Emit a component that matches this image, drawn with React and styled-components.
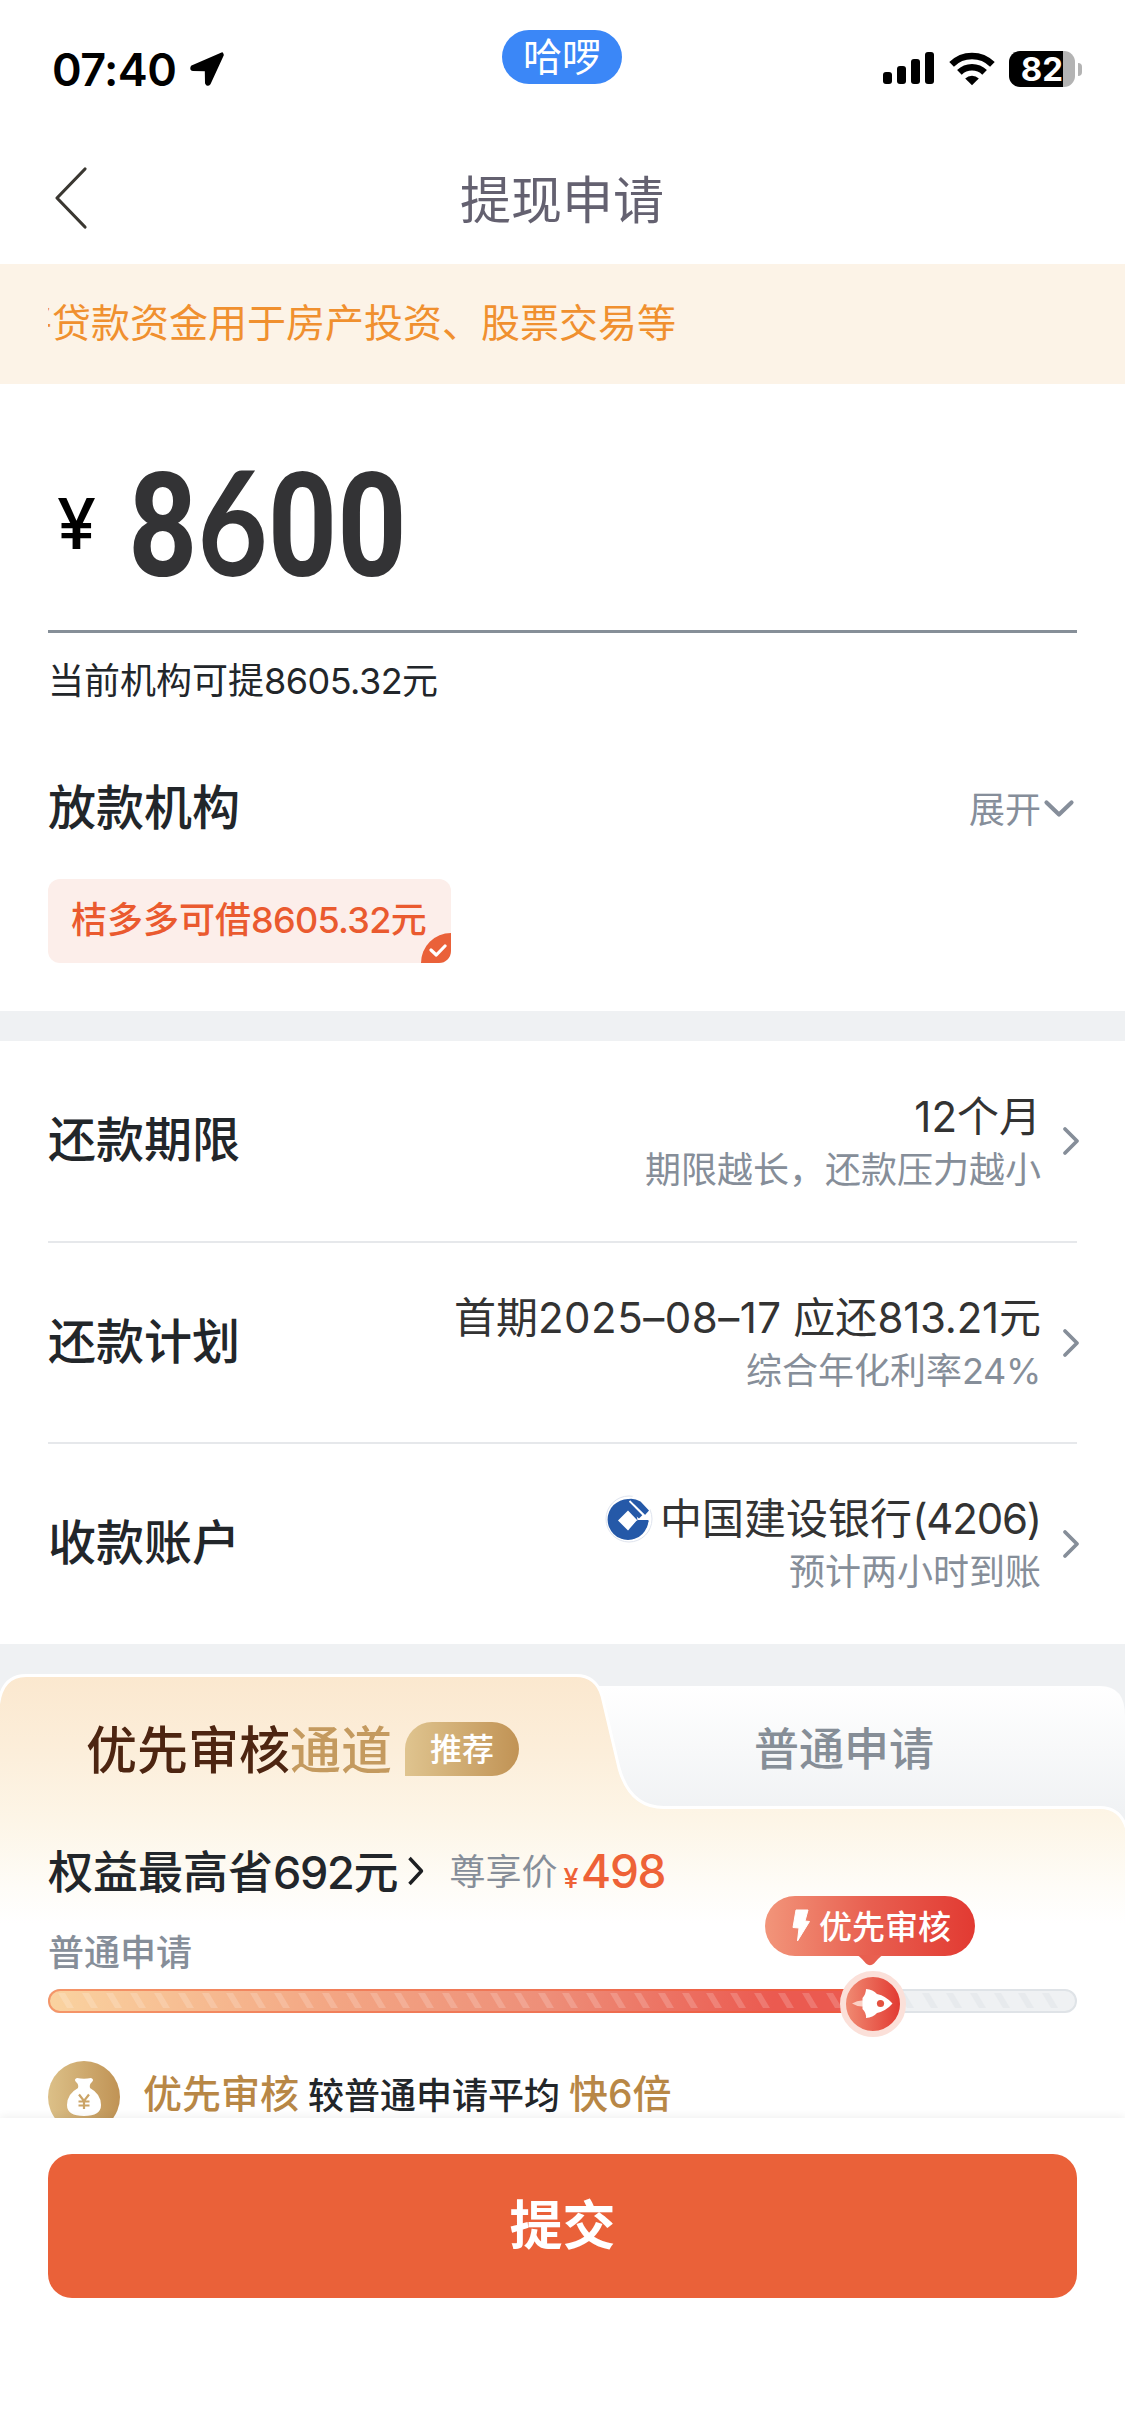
import React from "react";
import styled, { createGlobalStyle } from "styled-components";

const App = () => {
  return (
    <Page>
      <GlobalStyle />
      <StatusBar>
        <Clock>
          07:40
          <LocationIcon />
        </Clock>
        <AppPill>哈啰</AppPill>
        <StatusIcons>
          <SignalIcon />
          <WifiIcon />
          <Battery>
            <BatteryBody>82</BatteryBody>
            <BatteryCap />
          </Battery>
        </StatusIcons>
      </StatusBar>

      <NavBar>
        <BackIcon />
        <h1>提现申请</h1>
      </NavBar>

      <Notice>
        <div>
          <p>将贷款资金用于房产投资、股票交易等</p>
        </div>
      </Notice>

      <AmountSection>
        <Amount>
          <Currency>¥</Currency>
          <Digits>
            8<Six>6</Six>00
          </Digits>
        </Amount>
        <Available>
          当前机构可提<Num $track={-0.015}>8605.32</Num>元
        </Available>
        <LenderHead>
          <Title>放款机构</Title>
          <Expand>
            展开
            <DownIcon />
          </Expand>
        </LenderHead>
        <LenderChip>
          桔多多可借<Num>8605.32</Num>元
          <ChipCheck>
            <CheckIcon />
          </ChipCheck>
        </LenderChip>
      </AmountSection>

      <Gap />

      <Rows>
        <Row>
          <Title>还款期限</Title>
          <RowValue>
            <p>12个月</p>
            <small>期限越长，还款压力越小</small>
          </RowValue>
          <RightIcon />
        </Row>
        <Row>
          <Title>还款计划</Title>
          <RowValue>
            <p>
              首期<Num $track={0.012}>2025–08–17</Num> 应还<Num $track={-0.005}>813.21</Num>元
            </p>
            <small>
              综合年化利率<Num $track={-0.01}>24%</Num>
            </small>
          </RowValue>
          <RightIcon />
        </Row>
        <Row>
          <Title>收款账户</Title>
          <RowValue>
            <p>
              <BankIcon />
              中国建设银行<Num $track={-0.028}>(4206)</Num>
            </p>
            <small>预计两小时到账</small>
          </RowValue>
          <RightIcon />
        </Row>
      </Rows>

      <Channel>
        <TabShape />
        <Tabs>
          <ActiveTab>
            <b>优先审核</b>
            <i>通道</i>
            <Badge>推荐</Badge>
          </ActiveTab>
          <NormalTab>普通申请</NormalTab>
        </Tabs>
        <Benefit>
          <strong>
            权益最高省<Num $track={-0.03}>692</Num>元
          </strong>
          <SmallRightIcon />
          <PriceLabel>尊享价</PriceLabel>
          <Price>
            <i>¥</i>498
          </Price>
        </Benefit>
        <TrackLabel>普通申请</TrackLabel>
        <Track>
          <TrackFill />
          <Stripes />
          <Tip>
            <BoltIcon />
            <span>优先审核</span>
            <TipTail />
          </Tip>
          <Knob>
            <RocketIcon />
          </Knob>
        </Track>
        <Perk>
          <BagIcon />
          <em>优先审核</em>
          <span>较普通申请平均</span>
          <em>快6倍</em>
        </Perk>
      </Channel>

      <Footer>
        <Submit>提交</Submit>
      </Footer>
    </Page>
  );
};

/* icons */

const LocationIcon = () => (
  <svg width="36" height="36" viewBox="0 0 36 36">
    <path
      d="M33 2.5 L3 15.5 Q1.5 18.5 4 18.8 L16.5 19 Q17 19 17 19.6 L17.2 32 Q18.5 35 20.5 32.5 L33.6 4 Z"
      fill="#000"
      stroke="#000"
      strokeWidth="2.4"
      strokeLinejoin="round"
    />
  </svg>
);

const SignalIcon = () => (
  <svg width="52" height="34" viewBox="0 0 52 34">
    <rect x="0" y="20" width="9" height="12" rx="3" />
    <rect x="14" y="14" width="9" height="18" rx="3" />
    <rect x="28" y="7" width="9" height="25" rx="3" />
    <rect x="42" y="0" width="9" height="32" rx="3" />
  </svg>
);

const WifiIcon = () => (
  <svg width="46" height="34" viewBox="0 0 46 34">
    <g fill="none" stroke="#000" strokeWidth="6.6">
      <path d="M2.6 12.4 A29 29 0 0 1 43.4 12.4" />
      <path d="M10.4 20.4 A18 18 0 0 1 35.6 20.4" />
    </g>
    <path d="M16.2 26.4 A10 10 0 0 1 29.8 26.4 L23 33.2 Z" />
  </svg>
);

const BackIcon = () => (
  <svg width="36" height="64" viewBox="0 0 36 64">
    <path
      d="M32 3 L4 32 L32 61"
      fill="none"
      stroke="#3a3731"
      strokeWidth="3.2"
      strokeLinecap="round"
      strokeLinejoin="round"
    />
  </svg>
);

const DownIcon = () => (
  <svg width="32" height="20" viewBox="0 0 32 20">
    <path
      d="M3.5 3.5 L16 15.5 L28.5 3.5"
      fill="none"
      stroke="#868e9a"
      strokeWidth="4.2"
      strokeLinecap="round"
      strokeLinejoin="round"
    />
  </svg>
);

const CheckIcon = () => (
  <svg width="18" height="13" viewBox="0 0 18 13">
    <path
      d="M2 6 L7.3 11 L16 2"
      fill="none"
      stroke="#fff"
      strokeWidth="3.2"
      strokeLinecap="round"
      strokeLinejoin="round"
    />
  </svg>
);

const RightIcon = () => (
  <svg width="18" height="30" viewBox="0 0 18 30">
    <path
      d="M3 3 L15 15 L3 27"
      fill="none"
      stroke="#868e99"
      strokeWidth="3.8"
      strokeLinecap="round"
      strokeLinejoin="round"
    />
  </svg>
);

const SmallRightIcon = () => (
  <svg width="18" height="30" viewBox="0 0 18 30">
    <path
      d="M2.5 2 L14.5 15 L2.5 28"
      fill="none"
      stroke="#1d1f22"
      strokeWidth="3.4"
      strokeLinejoin="round"
    />
  </svg>
);

const BankIcon = () => (
  <svg width="48" height="48" viewBox="6.5 9 48 48">
    <circle cx="30.5" cy="33" r="23" fill="#fff" stroke="#dfe4ee" />
    <circle cx="29.5" cy="33.5" r="20.4" fill="#2559a8" />
    <path d="M39 34 L51 34 L52 10 L34 10 Z" fill="#fff" />
    <path d="M29.5 24.5 L39 34.5 L29.5 44.5 L19.5 34.5 Z" fill="#fff" />
    <path d="M30 13 L46.5 29 L50.5 24.5 L42 15.5 Q36 12 30 13 Z" fill="#2559a8" />
    <path d="M24 14 L30.5 15.5 L44 29 L40.5 32.5 L32 26 Z" fill="#2559a8" />
    <path d="M31 15 L45.5 29.5" stroke="#fff" strokeWidth="1.8" />
    <path d="M38 34.8 L50.3 34.8 L47 43 L31 43 Z" fill="#2559a8" />
  </svg>
);

const BoltIcon = () => (
  <svg width="20" height="34" viewBox="0 0 20 34">
    <path
      d="M5 1 L17 1 L14 12 L18.5 12.5 L6.5 32 L8 19 L2 18.5 Z"
      fill="#fff"
      stroke="#fff"
      strokeLinejoin="round"
    />
  </svg>
);

const RocketIcon = () => (
  <svg width="54" height="54" viewBox="0 0 54 54">
    <path d="M6 26.5 Q12 23 17 23.5 L17 29.5 Q12 30 6 26.5 Z" fill="#fbd0c4" />
    <path
      d="M20 12 Q27 12.5 31 17 Q40 19 46.5 26.5 Q40 34 31 36 Q27 40.5 20 41 Q20.5 36 16.5 32 L16.5 21 Q20 17 20 12 Z"
      fill="#fff"
    />
    <circle cx="34.5" cy="26.5" r="3.6" fill="#e4513f" />
  </svg>
);

const BagIcon = () => (
  <svg width="72" height="72" viewBox="0 0 72 72">
    <defs>
      <linearGradient id="bag" x1="0" x2="1">
        <stop offset="0" stopColor="#dcc088" />
        <stop offset="1" stopColor="#c09355" />
      </linearGradient>
    </defs>
    <circle cx="36" cy="36" r="36" fill="url(#bag)" />
    <path
      d="M29 17 Q36 18.5 43 17 Q46.5 18.5 44 21 Q41 23.5 42 27 Q53 33 53 44 Q53 55 36 55 Q19 55 19 44 Q19 33 30 27 Q31 23.5 28 21 Q25.5 18.5 29 17 Z"
      fill="#fff"
    />
    <path
      d="M31 33.5 L36 40 L41 33.5 M36 40 V48 M30.5 40.5 H41.5 M30.5 44.5 H41.5"
      fill="none"
      stroke="#cba467"
      strokeWidth="2.2"
    />
  </svg>
);

const TipTail = () => (
  <TailSvg width="28" height="11" viewBox="0 0 28 11">
    <path d="M0 0 Q3 0.5 6 4 L10 8.5 Q14 12 18 8.5 L22 4 Q25 0.5 28 0 Z" fill="#e85f50" />
  </TailSvg>
);

const TabShape = () => (
  <ShapeSvg width="1125" height="260" viewBox="0 0 1125 260">
    <defs>
      <linearGradient id="gold" gradientUnits="userSpaceOnUse" x1="0" x2="0" y1="3" y2="250">
        <stop offset="0" stopColor="#fbe8cf" />
        <stop offset="0.3" stopColor="#fceeda" />
        <stop offset="0.6" stopColor="#fdf6e8" />
        <stop offset="0.85" stopColor="#fefcf7" />
        <stop offset="1" stopColor="#ffffff" />
      </linearGradient>
      <linearGradient id="plain" x1="0" x2="0" y1="0" y2="1">
        <stop offset="0" stopColor="#ffffff" />
        <stop offset="0.85" stopColor="#f0f2f4" />
      </linearGradient>
    </defs>
    <path d="M590 12 H1100 Q1125 12 1125 42 V160 H590 Z" fill="url(#plain)" />
    <path
      d="M-2 260 V36 Q0 1.5 26 1.5 H576 Q596 1.5 602 22 L619 94 Q630 133.5 664 133.5 H1100 Q1121 133.5 1127 156 V260 Z"
      fill="url(#gold)"
      stroke="#fff"
      strokeWidth="3"
    />
  </ShapeSvg>
);

const Stripes = () => (
  <StripesSvg width="1029" height="24" viewBox="0 0 1029 24">
    {Array.from({ length: 42 }, (_, i) => (
      <path
        key={i}
        d={`M${10 + i * 24} 4 h7 l9 15 h-7 Z`}
        fill={i < 33 ? "#fff" : "#dfe3e7"}
        opacity={i < 33 ? 0.18 : 0.5}
      />
    ))}
  </StripesSvg>
);

/* styles */

const GlobalStyle = createGlobalStyle`
  * {
    margin: 0;
    padding: 0;
    box-sizing: border-box;
  }
  body {
    background: #fff;
    font-family: Inter, "Noto Sans CJK SC", sans-serif;
    color: #22262a;
  }
  svg {
    display: block;
    flex-shrink: 0;
  }
  i, em {
    font-style: normal;
  }
`;

const Page = styled.div`
  width: 1125px;
  height: 2436px;
  overflow: hidden;
  background: #fff;
`;

const StatusBar = styled.header`
  display: flex;
  justify-content: space-between;
  height: 132px;
  padding: 0 43px 0 52px;
`;

const Clock = styled.div`
  display: flex;
  align-items: center;
  gap: 13px;
  width: 440px;
  height: 60px;
  margin-top: 39px;
  font-size: 45px;
  font-weight: 600;
  letter-spacing: -0.6px;
  color: #000;
`;

const AppPill = styled.div`
  width: 120px;
  height: 54px;
  margin-top: 30px;
  border-radius: 27px;
  background: #3b87f7;
  color: #fff;
  font-size: 39px;
  font-weight: 400;
  line-height: 53px;
  text-align: center;
`;

const StatusIcons = styled.div`
  display: flex;
  justify-content: flex-end;
  gap: 14px;
  width: 450px;
  margin-top: 52px;
`;

const Battery = styled.div`
  display: flex;
  gap: 3px;
  margin-top: -1px;
`;

const BatteryBody = styled.div`
  width: 66px;
  height: 36px;
  border-radius: 11px;
  background: linear-gradient(90deg, #000 54px, #b3b3b3 54px);
  color: #fff;
  font-size: 33px;
  font-weight: 700;
  line-height: 36px;
  text-align: center;
`;

const BatteryCap = styled.div`
  width: 4px;
  height: 13px;
  margin-top: 12px;
  border-radius: 0 6px 6px 0;
  background: #b3b3b3;
`;

const NavBar = styled.nav`
  display: flex;
  align-items: center;
  height: 132px;
  padding: 0 53px;
  h1 {
    flex: 1;
    margin: -3px 37px 0 0;
    color: #646170;
    font-size: 51px;
    font-weight: 400;
    text-align: center;
  }
`;

const Notice = styled.div`
  height: 120px;
  padding: 0 48px;
  background: #fcf3e7;
  div {
    display: flex;
    overflow: hidden;
  }
  p {
    margin-left: -35px;
    color: #f0902f;
    font-size: 39px;
    line-height: 117px;
    white-space: nowrap;
  }
`;

const AmountSection = styled.section`
  height: 627px;
  padding: 0 48px;
`;

const Amount = styled.div`
  display: flex;
  height: 249px;
  border-bottom: 3px solid #868f98;
  color: #333335;
`;

const Currency = styled.span`
  width: 80px;
  padding-left: 9px;
  color: #000;
  font-size: 70px;
  font-weight: 500;
  line-height: 279px;
`;

const Digits = styled.span`
  display: block;
  font-family: Roboto, sans-serif;
  font-size: 145px;
  font-weight: 700;
  line-height: 273px;
  transform: scaleX(0.835);
  transform-origin: left;
`;

const Six = styled.span`
  font-family: Lato, sans-serif;
`;

const Available = styled.p`
  margin-top: 21px;
  font-size: 36px;
  line-height: 54px;
`;

const Num = styled.span`
  letter-spacing: ${({ $track = -0.02 }) => $track}em;
`;

const LenderHead = styled.div`
  display: flex;
  align-items: center;
  justify-content: space-between;
  height: 72px;
  margin-top: 63px;
  padding-right: 2px;
`;

const Title = styled.h2`
  padding-bottom: 6px;
  font-size: 48px;
  font-weight: 500;
`;

const Expand = styled.div`
  display: flex;
  align-items: center;
  gap: 2px;
  color: #868e9a;
  font-size: 36px;
  svg {
    margin-top: 4px;
  }
`;

const LenderChip = styled.div`
  position: relative;
  width: 403px;
  height: 84px;
  margin-top: 36px;
  padding-left: 23px;
  border-radius: 12px;
  background: #fceeea;
  color: #ea5a2f;
  font-size: 36px;
  font-weight: 500;
  line-height: 83px;
  white-space: nowrap;
`;

const ChipCheck = styled.div`
  position: absolute;
  right: 0;
  bottom: 0;
  width: 30px;
  height: 30px;
  padding: 11px 0 0 8px;
  border-radius: 30px 0 12px 0;
  background: #ea6139;
`;

const Gap = styled.div`
  height: 30px;
  background: #eff1f3;
`;

const Rows = styled.section`
  height: 603px;
  padding: 0 48px;
`;

const Row = styled.div`
  display: flex;
  align-items: center;
  height: 201px;
  &:first-child {
    height: 200px;
  }
  & + & {
    border-top: 2px solid #e6e8eb;
  }
  > h2 {
    padding-bottom: 10px;
  }
  > svg {
    margin-right: -3px;
  }
`;

const RowValue = styled.div`
  flex: 1;
  margin: 4px 21px 0 0;
  text-align: right;
  p {
    display: flex;
    align-items: center;
    justify-content: flex-end;
    color: #333;
    font-size: 42px;
    line-height: 54px;
    white-space: pre;
  }
  small {
    display: block;
    color: #868e99;
    font-size: 36px;
    line-height: 53px;
  }
  svg {
    margin-right: 7px;
  }
`;

const Channel = styled.section`
  position: relative;
  z-index: 0;
  height: 474px;
  padding-top: 30px;
  overflow: hidden;
  background: linear-gradient(#eff1f3 200px, #fff 200px);
`;

const ShapeSvg = styled.svg`
  position: absolute;
  z-index: -1;
  top: 30px;
  left: 0;
`;

const Tabs = styled.div`
  display: flex;
  height: 136px;
`;

const ActiveTab = styled.div`
  display: flex;
  align-items: center;
  width: 600px;
  height: 150px;
  padding-left: 86px;
  font-size: 51px;
  b,
  i {
    padding-bottom: 4px;
    font-weight: 500;
  }
  b {
    color: #4d2511;
  }
  i {
    color: #c49a5f;
  }
`;

const Badge = styled.span`
  width: 114px;
  height: 54px;
  margin-left: 13px;
  border-radius: 27px 27px 27px 0;
  background: linear-gradient(90deg, #dfc48f, #c19355);
  color: #fff;
  font-size: 32px;
  font-weight: 500;
  line-height: 55px;
  text-align: center;
`;

const NormalTab = styled.div`
  flex: 1;
  padding-left: 154px;
  color: #868e97;
  font-size: 45px;
  font-weight: 500;
  line-height: 151px;
`;

const Benefit = styled.div`
  display: flex;
  align-items: center;
  height: 122px;
  padding: 0 48px;
  strong {
    padding-bottom: 4px;
    font-size: 45px;
    font-weight: 500;
  }
  svg {
    margin: 0 24px 0 9px;
  }
`;

const PriceLabel = styled.span`
  padding-bottom: 4px;
  color: #868e99;
  font-size: 36px;
`;

const Price = styled.div`
  display: flex;
  align-items: baseline;
  gap: 4px;
  margin-left: 6px;
  color: #ee6237;
  font-size: 46px;
  font-weight: 500;
  letter-spacing: -0.03em;
  i {
    font-size: 27px;
  }
`;

const TrackLabel = styled.p`
  height: 57px;
  padding-left: 48px;
  color: #868e99;
  font-size: 36px;
  font-weight: 500;
  line-height: 42px;
`;

const Track = styled.div`
  position: relative;
  height: 24px;
  margin: 0 48px;
  border: 2px solid #dfe3e7;
  border-radius: 12px;
  background: #eff1f3;
`;

const TrackFill = styled.div`
  width: 825px;
  height: 24px;
  margin: -2px;
  border: 2px solid rgba(240, 90, 50, 0.5);
  border-radius: 12px 0 0 12px;
  background: linear-gradient(90deg, #fad3a0, #f3a583 35%, #ee8f79 60%, #eb5a50 88%);
  background-origin: border-box;
`;

const StripesSvg = styled.svg`
  position: absolute;
  top: -2px;
  left: -2px;
`;

const Tip = styled.div`
  position: absolute;
  top: -95px;
  left: 715px;
  display: flex;
  align-items: center;
  gap: 8px;
  width: 210px;
  height: 60px;
  padding-left: 26px;
  border-radius: 30px;
  background: linear-gradient(90deg, #f2957a, #e85f50 50%, #e23a32);
  color: #fff;
  font-size: 33px;
  font-weight: 500;
  white-space: nowrap;
  span {
    padding-bottom: 3px;
  }
`;

const TailSvg = styled.svg`
  position: absolute;
  top: 59px;
  left: 91px;
`;

const Knob = styled.div`
  position: absolute;
  top: -20px;
  left: 790px;
  width: 66px;
  height: 66px;
  border: 6px solid #fbe0d9;
  border-radius: 50%;
  background: linear-gradient(90deg, #f08a72, #e23a32);
`;

const Perk = styled.div`
  display: flex;
  align-items: center;
  height: 72px;
  margin: 48px 48px 0;
  em {
    margin-bottom: 7px;
    color: #b88746;
    font-size: 39px;
    font-weight: 500;
    line-height: 40px;
  }
  span {
    margin: 0 9px 3px;
    font-size: 36px;
    font-weight: 500;
    line-height: 38px;
  }
  svg {
    margin-right: 23px;
  }
`;

const Footer = styled.footer`
  position: relative;
  height: 318px;
  padding: 36px 48px 0;
  background: #fff;
  box-shadow: 0 -2px 8px rgba(0, 0, 0, 0.06);
`;

const Submit = styled.button`
  display: block;
  width: 100%;
  height: 144px;
  padding-bottom: 8px;
  border: 0;
  border-radius: 24px;
  background: #ea6139;
  color: #fff;
  font-family: inherit;
  font-size: 53px;
  font-weight: 600;
`;

export default App;
